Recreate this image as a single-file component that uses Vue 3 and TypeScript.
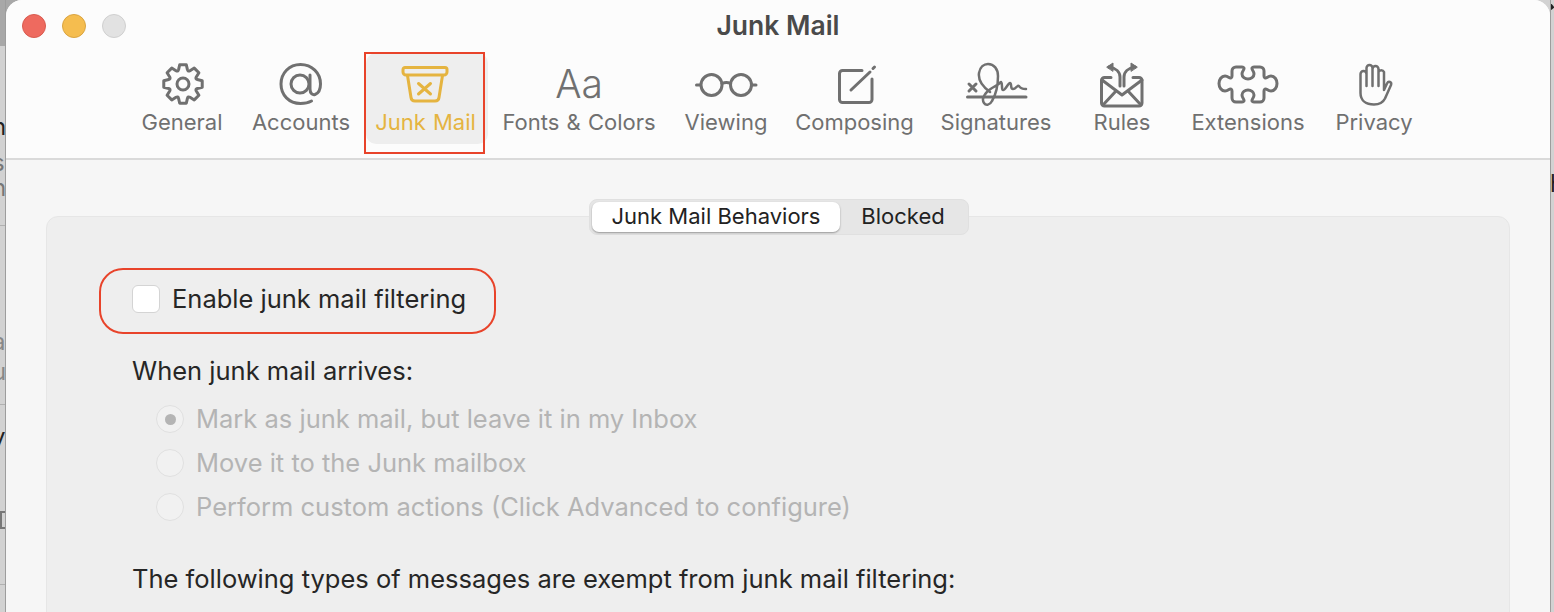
<template>
  <div class="desktop">
    <div class="edge edge--left">
      <span
        v-for="f in leftBits"
        :key="f.y"
        class="edge__bit"
        :style="{ top: f.y + 'px', color: f.c }"
      >{{ f.t }}</span>
      <i v-for="y in leftRules" :key="y" class="edge__rule" :style="{ top: y + 'px' }"></i>
      <i class="edge__box"></i>
    </div>

    <div class="window">
      <header class="toolbar">
        <div class="titlebar">
          <div class="lights">
            <span class="light light--red"></span>
            <span class="light light--yellow"></span>
            <span class="light light--off"></span>
          </div>
          <h1 class="titlebar__title">Junk Mail</h1>
        </div>

        <nav class="tabs">
          <div
            v-for="tab in tabs"
            :key="tab.label"
            class="tab"
            :class="{ 'tab--active': tab.label === 'Junk Mail' }"
            :style="{ width: tab.width + 'px' }"
          >
            <span v-if="tab.icon === 'aa'" class="tab__glyph">Aa</span>
            <svg v-else class="tab__icon" viewBox="0 0 60 44">
              <template v-if="tab.icon === 'gear'">
                <path :d="gearPath" />
                <circle cx="31" cy="22" r="6" />
              </template>
              <template v-else-if="tab.icon === 'at'">
                <circle cx="29" cy="22" r="9" />
                <path d="M39 13V27C39 32 42 33 44 32.500C48 31 49.500 27 49.500 22C49.500 11 41 2.500 29.500 2.500C18 2.500 10 11.500 10 22C10 33 18 41.500 29.500 41.500C33.500 41.500 37 41 40.500 39" />
              </template>
              <template v-else-if="tab.icon === 'junk'">
                <g transform="translate(4 0)">
                  <path d="M5 5.500H45A2 2 0 0 1 47 7.500V10A3 3 0 0 1 44 13H6A3 3 0 0 1 3 10V7.500A2 2 0 0 1 5 5.500Z" />
                  <path d="M7.500 13.500L11 35.500A4 4 0 0 0 15 39H35A4 4 0 0 0 39 35.500L42.500 13.500" />
                  <path d="M18.500 21.500L30.500 32M30.500 21.500L18.500 32" />
                </g>
              </template>
              <template v-else-if="tab.icon === 'glasses'">
                <circle cx="15.500" cy="23" r="10.500" />
                <circle cx="45" cy="23" r="10.500" />
                <path d="M26 21.500Q30.500 19.500 34.500 21.500M0.500 23H4.500M56 23H60" />
              </template>
              <template v-else-if="tab.icon === 'compose'">
                <path d="M37 8.500H17.500A3 3 0 0 0 14.500 11.500V37.500A3 3 0 0 0 17.500 40.500H44A3 3 0 0 0 47 37.500V17" />
                <path d="M26 28L45 10M48 6.500L49.500 5" />
              </template>
              <template v-else-if="tab.icon === 'signature'">
                <path d="M1.500 35H60" />
                <path d="M3 22L10 29M10 22L3 29" />
                <path class="thin" d="M24 30C17 25 12 18 13 11C14 5 18 2 22 2C28 2 32 7 32 14C32 24 29 34 26 39C24 43 20 44 18 41C15 37 19 30 26 26C30 24 33 22 35 20C37 22 35 27 37 28C39 29 42 21 44 21C46 21 44 27 47 27C50 27 51 23 53 24C54 26 56 27 60 27" />
              </template>
              <template v-else-if="tab.icon === 'rules'">
                <path d="M19 15.500H12.500A3 3 0 0 0 9.500 18.500V41A3 3 0 0 0 12.500 44H47A3 3 0 0 0 50 41V18.500A3 3 0 0 0 47 15.500H41" />
                <path d="M10 18L30 33L50 18M11 43L24 29M49 43L36 29" />
                <path d="M28 24V15C28 10 24 6 17 5M32 24V15C32 10 36 6 43 5" />
                <path class="solid" d="M15 5L21 1V9ZM45 5L39 1V9Z" />
              </template>
              <template v-else-if="tab.icon === 'puzzle'">
                <path d="M18 5H24C26 5 26.500 6.500 25.500 8C24.500 9.500 24 10.500 24 12C24 15 27 17 30 17C33 17 36 15 36 12C36 10.500 35.500 9.500 34.500 8C33.500 6.500 34 5 36 5H42A4 4 0 0 1 46 9V14C46 16 47.500 16.500 49 15.500C50.500 14.500 51.500 14 53 14C56.500 14 59 17.500 59 21.500C59 25.500 56.500 29 53 29C51.500 29 50.500 28.500 49 27.500C47.500 26.500 46 27 46 29V36A4 4 0 0 1 42 40H36C34 40 33.500 38.500 34.500 37C35.500 35.500 36 34.500 36 33C36 30 33 28 30 28C27 28 24 30 24 33C24 34.500 24.500 35.500 25.500 37C26.500 38.500 26 40 24 40H18A4 4 0 0 1 14 36V29C14 27 12.500 26.500 11 27.500C9.500 28.500 8.500 29 7 29C3.500 29 1 25.500 1 21.500C1 17.500 3.500 14 7 14C8.500 14 9.500 14.500 11 15.500C12.500 16.500 14 16 14 14V9A4 4 0 0 1 18 5Z" />
              </template>
              <template v-else-if="tab.icon === 'hand'">
                <path class="thin" d="M16.500 31V12A3 3 0 0 1 22.500 12V24M22.500 24V6A3 3 0 0 1 28.500 6V24M28.500 24V7A3 3 0 0 1 34.500 7V24M34.500 24V10A3 3 0 0 1 40 10V28L43 21.500C44.500 18.500 48 20 47 23L41 36.500C39 40.500 35.500 42.500 30 42.500C22 42.500 16.500 38.500 16.500 31" />
              </template>
            </svg>
            <span class="tab__label">{{ tab.label }}</span>
          </div>
          <span class="callout callout--tab"></span>
        </nav>
      </header>

      <main class="body">
        <section class="panel">
          <div class="segments">
            <span class="segment segment--on">Junk Mail Behaviors</span>
            <span class="segment">Blocked</span>
          </div>

          <div class="enable">
            <span class="checkbox"></span>
            <span class="line">Enable junk mail filtering</span>
          </div>

          <p class="line line--heading">When junk mail arrives:</p>
          <ul class="radios">
            <li v-for="(r, i) in radios" :key="r" class="radio">
              <span class="radio__dot" :class="{ 'radio__dot--on': i === 0 }"></span>
              <span class="line line--off">{{ r }}</span>
            </li>
          </ul>

          <p class="line line--exempt">The following types of messages are exempt from junk mail filtering:</p>
        </section>
      </main>
    </div>

    <div class="edge edge--right">
      <i class="edge__corner"></i>
      <span class="edge__bit edge__bit--right">h</span>
    </div>
  </div>
</template>

<script setup lang="ts">
interface Tab {
  label: string
  icon: string
  width: number
}

const tabs: Tab[] = [
  { label: 'General', icon: 'gear', width: 108 },
  { label: 'Accounts', icon: 'at', width: 130 },
  { label: 'Junk Mail', icon: 'junk', width: 122 },
  { label: 'Fonts & Colors', icon: 'aa', width: 182 },
  { label: 'Viewing', icon: 'glasses', width: 112 },
  { label: 'Composing', icon: 'compose', width: 145 },
  { label: 'Signatures', icon: 'signature', width: 138 },
  { label: 'Rules', icon: 'rules', width: 114 },
  { label: 'Extensions', icon: 'puzzle', width: 138 },
  { label: 'Privacy', icon: 'hand', width: 114 },
]

const radios = [
  'Mark as junk mail, but leave it in my Inbox',
  'Move it to the Junk mailbox',
  'Perform custom actions (Click Advanced to configure)',
]

const leftBits = [
  { y: 117, t: 'n', c: '#222' },
  { y: 153, t: 's', c: '#777' },
  { y: 178, t: 'n', c: '#777' },
  { y: 332, t: 'a', c: '#888' },
  { y: 362, t: 'u', c: '#888' },
  { y: 427, t: 'y', c: '#222' },
  { y: 472, t: 't', c: '#111' },
]
const leftRules = [225, 404, 584]

// eight teeth, rounded valleys, first tooth straight up
function buildGear(cx: number, cy: number): string {
  const pt = (r: number, a: number) =>
    `${(cx + r * Math.sin(a)).toFixed(2)} ${(cy - r * Math.cos(a)).toFixed(2)}`
  const step = Math.PI / 4
  let d = ''
  for (let i = 0; i < 8; i++) {
    const a = i * step
    d += `${i === 0 ? 'M' : 'L'}${pt(15, a - 0.3)}L${pt(19.5, a - 0.17)}L${pt(19.5, a + 0.17)}L${pt(15, a + 0.3)}`
    d += `Q${pt(13.2, a + step / 2)} ${pt(15, a + step - 0.3)}`
  }
  return d + 'Z'
}
const gearPath = buildGear(31, 22)
</script>

<style>
html,
body {
  margin: 0;
  background: #cfcfcf;
}
</style>

<style scoped>
* {
  box-sizing: border-box;
}

.desktop {
  display: flex;
  width: 1554px;
  height: 612px;
  overflow: hidden;
  background: linear-gradient(90deg, #a8a8a8 50%, #d2d2d2 50%);
  font-family: Inter, "Liberation Sans", sans-serif;
}

.edge {
  position: relative;
  flex: none;
  overflow: hidden;
}
.edge--left {
  width: 6px;
  background: linear-gradient(#a8a8a8 46px, #d2d2d2 46px);
  border-right: 1px solid #9d9d9d;
}
.edge--right {
  width: 4px;
  background: #d2d2d2;
  border-left: 1px solid #9d9d9d;
}
.edge__bit {
  position: absolute;
  left: -8px;
  font-size: 24px;
  line-height: 20px;
}
.edge__bit--right {
  left: -1px;
  top: 174px;
  color: #222;
}
.edge__rule {
  position: absolute;
  left: 0;
  width: 6px;
  height: 1px;
  background: #b0b0b0;
}
.edge__box {
  position: absolute;
  left: 0;
  top: 511px;
  width: 8px;
  height: 18px;
  border: 2px solid #777;
}
.edge__corner {
  position: absolute;
  left: -4px;
  top: -2px;
  width: 4px;
  height: 12px;
  background: #222;
  transform: rotate(-40deg);
}

.window {
  flex: 1;
  display: flex;
  flex-direction: column;
  min-width: 0;
  background: #f6f6f6;
  border-radius: 16px 16px 0 0;
  overflow: hidden;
}

.toolbar {
  flex: none;
  height: 160px;
  background: #fcfcfc;
  border-bottom: 2px solid #dadada;
}

.titlebar {
  position: relative;
  display: flex;
  align-items: flex-start;
  justify-content: center;
  height: 52px;
}
.lights {
  position: absolute;
  left: 16px;
  top: 14px;
  display: flex;
  gap: 16px;
}
.light {
  width: 24px;
  height: 24px;
  border-radius: 50%;
}
.light--red {
  background: #ee6a5f;
  border: 1px solid #d85b50;
}
.light--yellow {
  background: #f5bd4f;
  border: 1px solid #d9a441;
}
.light--off {
  background: #e2e2e2;
  border: 1px solid #cfcfcf;
}
.titlebar__title {
  margin: 0;
  font-size: 26.5px;
  font-weight: 600;
  color: #4a4a4a;
  line-height: 50px;
}

.tabs {
  position: relative;
  display: flex;
  height: 92px;
  margin-top: 1px;
  padding-left: 122px;
}
.tab {
  flex: none;
  display: flex;
  flex-direction: column;
  align-items: center;
  height: 91px;
  padding-top: 9px;
  color: #707070;
  border-radius: 10px;
}
.tab--active {
  padding-right: 3px;
  background: #eeeeee;
  color: #e5b440;
}
.tab__icon {
  flex: none;
  width: 60px;
  height: 44px;
  overflow: visible;
  fill: none;
  stroke: currentColor;
  stroke-width: 3;
  stroke-linecap: round;
  stroke-linejoin: round;
}
.tab__icon .thin {
  stroke-width: 2.5;
}
.tab__icon .solid {
  fill: currentColor;
  stroke-width: 1;
}
.tab__glyph {
  display: block;
  height: 44px;
  font-size: 39px;
  line-height: 44px;
  font-weight: 300;
}
.tab__label {
  margin-top: 2px;
  font-size: 22px;
  word-spacing: 1px;
  line-height: 28px;
  white-space: nowrap;
}

.callout {
  position: absolute;
  border: 2px solid #e8432a;
  pointer-events: none;
}
.callout--tab {
  left: 358px;
  top: -1px;
  width: 121px;
  height: 102px;
}

.body {
  flex: 1;
  padding: 56px 40px 0;
}
.panel {
  position: relative;
  height: 420px;
  padding: 67px 0 0 85px;
  background: #eeeeee;
  border: 1px solid #e6e6e6;
  border-radius: 12px;
}

.segments {
  position: absolute;
  left: 542px;
  top: -18px;
  display: flex;
  height: 36px;
  padding: 2px;
  background: #e6e6e6;
  border: 1px solid #e0e0e0;
  border-radius: 8px;
}
.segment {
  display: flex;
  align-items: center;
  justify-content: center;
  width: 126px;
  padding-bottom: 2px;
  font-size: 22px;
  color: #222;
  white-space: nowrap;
}
.segment--on {
  width: 248px;
  background: #fff;
  border-radius: 7px;
  box-shadow: 0 1px 2px rgba(0, 0, 0, 0.35);
}

.enable {
  position: relative;
  display: flex;
  align-items: center;
  gap: 12px;
  height: 30px;
}
.enable::before {
  content: "";
  position: absolute;
  box-sizing: border-box;
  left: -33px;
  top: -16px;
  width: 397px;
  height: 66px;
  border: 2px solid #e8432a;
  border-radius: 24px;
}
.checkbox {
  width: 28px;
  height: 28px;
  background: #fff;
  border: 1px solid #d4d4d4;
  border-radius: 6px;
}

.line {
  font-size: 25.5px;
  line-height: 30px;
  color: #262626;
  white-space: nowrap;
}
.line--heading {
  margin: 42px 0 0;
}
.line--off {
  color: #b4b4b4;
}
.line--exempt {
  margin: 43px 0 0;
}

.radios {
  display: flex;
  flex-direction: column;
  gap: 16px;
  margin: 19px 0 0 24px;
  padding: 0;
  list-style: none;
}
.radio {
  display: flex;
  align-items: center;
  gap: 12px;
  height: 28px;
}
.radio__dot {
  position: relative;
  flex: none;
  width: 28px;
  height: 28px;
  background: #f1f1f1;
  border: 1px solid #e0e0e0;
  border-radius: 50%;
}
.radio__dot--on::after {
  content: "";
  position: absolute;
  inset: 7.5px;
  background: #b4b4b4;
  border-radius: 50%;
}
</style>
